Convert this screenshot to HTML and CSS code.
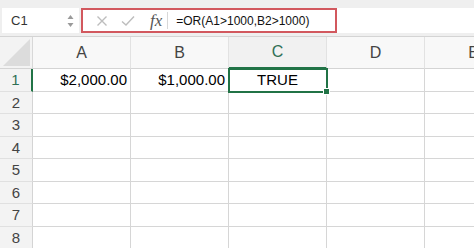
FILE: index.html
```html
<!DOCTYPE html>
<html lang="en">
<head>
    <meta charset="UTF-8">
    <meta name="viewport" content="width=device-width, initial-scale=1.0">
    <title>Sheet</title>
    <link rel="stylesheet" href="styles.css">
</head>
<body>
    <!-- Formula bar -->
    <div class="toolbar">
        <div class="name-box">
            <span>C1</span>
            <span class="spinner">
                <svg width="7" height="14" viewBox="0 0 7 14">
                    <path d="M3.5 1 L6.5 5 L0.5 5 Z" fill="#9a9a9a"/>
                    <path d="M3.5 13 L6.5 9 L0.5 9 Z" fill="#9a9a9a"/>
                </svg>
            </span>
        </div>
        <div class="formula-field">
            <div class="formula-box">
                <svg class="icon" width="12" height="12" viewBox="0 0 12 12">
                    <path d="M1.5 1.5 L10.5 10.5 M10.5 1.5 L1.5 10.5" stroke="#bdbdbd" stroke-width="1.4" fill="none"/>
                </svg>
                <svg class="icon" width="14" height="12" viewBox="0 0 14 12">
                    <path d="M1 6.5 L5 10 L13 1.5" stroke="#bdbdbd" stroke-width="1.4" fill="none"/>
                </svg>
                <span class="fx">fx</span>
                <span class="formula-text">=OR(A1&gt;1000,B2&gt;1000)</span>
            </div>
        </div>
    </div>

    <!-- Grid -->
    <div class="sheet">
        <div class="corner">
            <svg width="27" height="27" viewBox="0 0 27 27">
                <path d="M27 0 L27 27 L0 27 Z" fill="#dcdcdc"/>
            </svg>
        </div>
        <div class="col-head">A</div>
        <div class="col-head">B</div>
        <div class="col-head active">C</div>
        <div class="col-head">D</div>
        <div class="col-head">E</div>

        <div class="row-head active">1</div>
        <div class="cell num">$2,000.00</div>
        <div class="cell num">$1,000.00</div>
        <div class="cell bool selected">TRUE</div>
        <div class="cell"></div>
        <div class="cell"></div>

        <div class="row-head">2</div>
        <div class="cell"></div><div class="cell"></div><div class="cell"></div><div class="cell"></div><div class="cell"></div>
        <div class="row-head">3</div>
        <div class="cell"></div><div class="cell"></div><div class="cell"></div><div class="cell"></div><div class="cell"></div>
        <div class="row-head">4</div>
        <div class="cell"></div><div class="cell"></div><div class="cell"></div><div class="cell"></div><div class="cell"></div>
        <div class="row-head">5</div>
        <div class="cell"></div><div class="cell"></div><div class="cell"></div><div class="cell"></div><div class="cell"></div>
        <div class="row-head">6</div>
        <div class="cell"></div><div class="cell"></div><div class="cell"></div><div class="cell"></div><div class="cell"></div>
        <div class="row-head">7</div>
        <div class="cell"></div><div class="cell"></div><div class="cell"></div><div class="cell"></div><div class="cell"></div>
        <div class="row-head">8</div>
        <div class="cell"></div><div class="cell"></div><div class="cell"></div><div class="cell"></div><div class="cell"></div>
    </div>
</body>
</html>
```

FILE: styles.css
```css
/* General styles */
body {
    font-family: "Liberation Sans", Arial, sans-serif;
    margin: 0;
    padding: 0;
    background: #fff;
    color: #222;
    width: 474px;
    height: 248px;
    overflow: hidden;
}

/* Formula bar */
.toolbar {
    display: flex;
    background: #efefef;
    padding: 8px 0 2px 2px;
    height: 26px;
}

.name-box {
    width: 77px;
    height: 25px;
    background: #fff;
    display: flex;
    align-items: center;
    justify-content: space-between;
    padding: 0 5px 0 9px;
    box-sizing: border-box;
    font-size: 13px;
    color: #333;
}

.spinner {
    display: flex;
}

.formula-field {
    flex-grow: 1;
    margin-left: 2px;
    background: #fff;
    height: 25px;
    display: flex;
}

.formula-box {
    width: 256px;
    height: 25px;
    box-sizing: border-box;
    border: 2px solid #d2585e;
    display: flex;
    align-items: center;
    padding-left: 13px;
}

.formula-box .icon {
    margin-right: 13px;
}

.fx {
    font-family: "Liberation Serif", "Times New Roman", serif;
    font-style: italic;
    font-size: 17px;
    color: #555;
    padding-right: 5px;
    margin-left: 2px;
    border-right: 1px solid #d8d8d8;
    line-height: 17px;
}

.formula-text {
    margin-left: 8px;
    font-size: 12px;
    color: #111;
}

/* Grid */
.sheet {
    display: grid;
    grid-template-columns: 33px 98px 98px 98px 98px 98px;
    grid-template-rows: 32px repeat(8, 22.5px);
    border-top: 1px solid #d4d4d4;
    overflow: hidden;
}

.corner {
    background: #f3f3f3;
    border-right: 1px solid #d8d8d8;
    border-bottom: 1px solid #d4d4d4;
    display: flex;
    align-items: flex-end;
    justify-content: flex-end;
    padding: 0 2px 2px 0;
}

.col-head {
    background: #f8f8f8;
    border-right: 1px solid #e2e2e2;
    border-bottom: 1px solid #d4d4d4;
    display: flex;
    align-items: center;
    justify-content: center;
    font-size: 16px;
    color: #444;
}

.col-head.active {
    background: #f1f1f1;
    color: #2f6f55;
    border-bottom: 2px solid #217346;
}

.row-head {
    background: #f3f3f3;
    border-right: 1px solid #d4d4d4;
    border-bottom: 1px solid #e0e0e0;
    display: flex;
    align-items: center;
    justify-content: center;
    font-size: 15px;
    color: #444;
}

.row-head.active {
    color: #2f6f55;
    border-right: 2px solid #217346;
}

.cell {
    border-right: 1px solid #d6d6d6;
    border-bottom: 1px solid #d6d6d6;
    display: flex;
    align-items: center;
    font-size: 15px;
    color: #000;
}

.cell.num {
    justify-content: flex-end;
    padding-right: 3px;
}

.cell.bool {
    justify-content: center;
}

.cell.selected {
    position: relative;
    outline: 2px solid #217346;
    outline-offset: -1px;
}

.cell.selected::after {
    content: "";
    position: absolute;
    right: -4px;
    bottom: -4px;
    width: 5px;
    height: 5px;
    background: #217346;
    border: 1px solid #fff;
}
```
